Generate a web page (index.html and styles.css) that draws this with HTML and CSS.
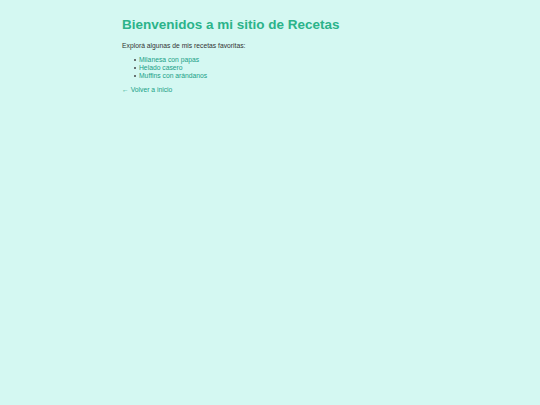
FILE: index.html
```html
<!DOCTYPE html>
<html lang="es">
<head>
<meta charset="utf-8">
<title>Recetas</title>
<link rel="stylesheet" href="styles.css">
</head>
<body>
<main class="page">
  <h1 class="title">Bienvenidos a mi sitio de Recetas</h1>
  <p class="intro">Explorá algunas de mis recetas favoritas:</p>
  <ul class="recipes">
    <li><a href="#">Milanesa con papas</a></li>
    <li><a href="#">Helado casero</a></li>
    <li><a href="#">Muffins con arándanos</a></li>
  </ul>
  <a class="back" href="#">← Volver a inicio</a>
</main>
</body>
</html>
```
FILE: styles.css
```css
html, body {
  margin: 0;
  padding: 0;
  background: #d4f8f2;
  height: 100%;
}
body {
  font-family: "Liberation Sans", Arial, sans-serif;
  font-size: 6.75px;
  line-height: 8px;
  color: #333333;
}
.page {
  width: 296px;
  margin: 0 auto;
  padding-top: 17px;
}
.title {
  margin: 0 0 9px;
  font-size: 13.5px;
  line-height: 16px;
  font-weight: bold;
  color: #2bb38a;
}
.intro {
  margin: 0 0 6px;
}
.recipes {
  margin: 0 0 6px;
  padding-left: 12px;
  list-style: none;
}
.recipes li {
  display: flex;
  align-items: center;
}
.recipes li::before {
  content: "";
  width: 2px;
  height: 2px;
  border-radius: 50%;
  background: #444444;
  margin-right: 3px;
  flex: none;
}
.recipes a, .back {
  color: #1aa086;
  text-decoration: none;
}
.back {
  display: block;
}
```
